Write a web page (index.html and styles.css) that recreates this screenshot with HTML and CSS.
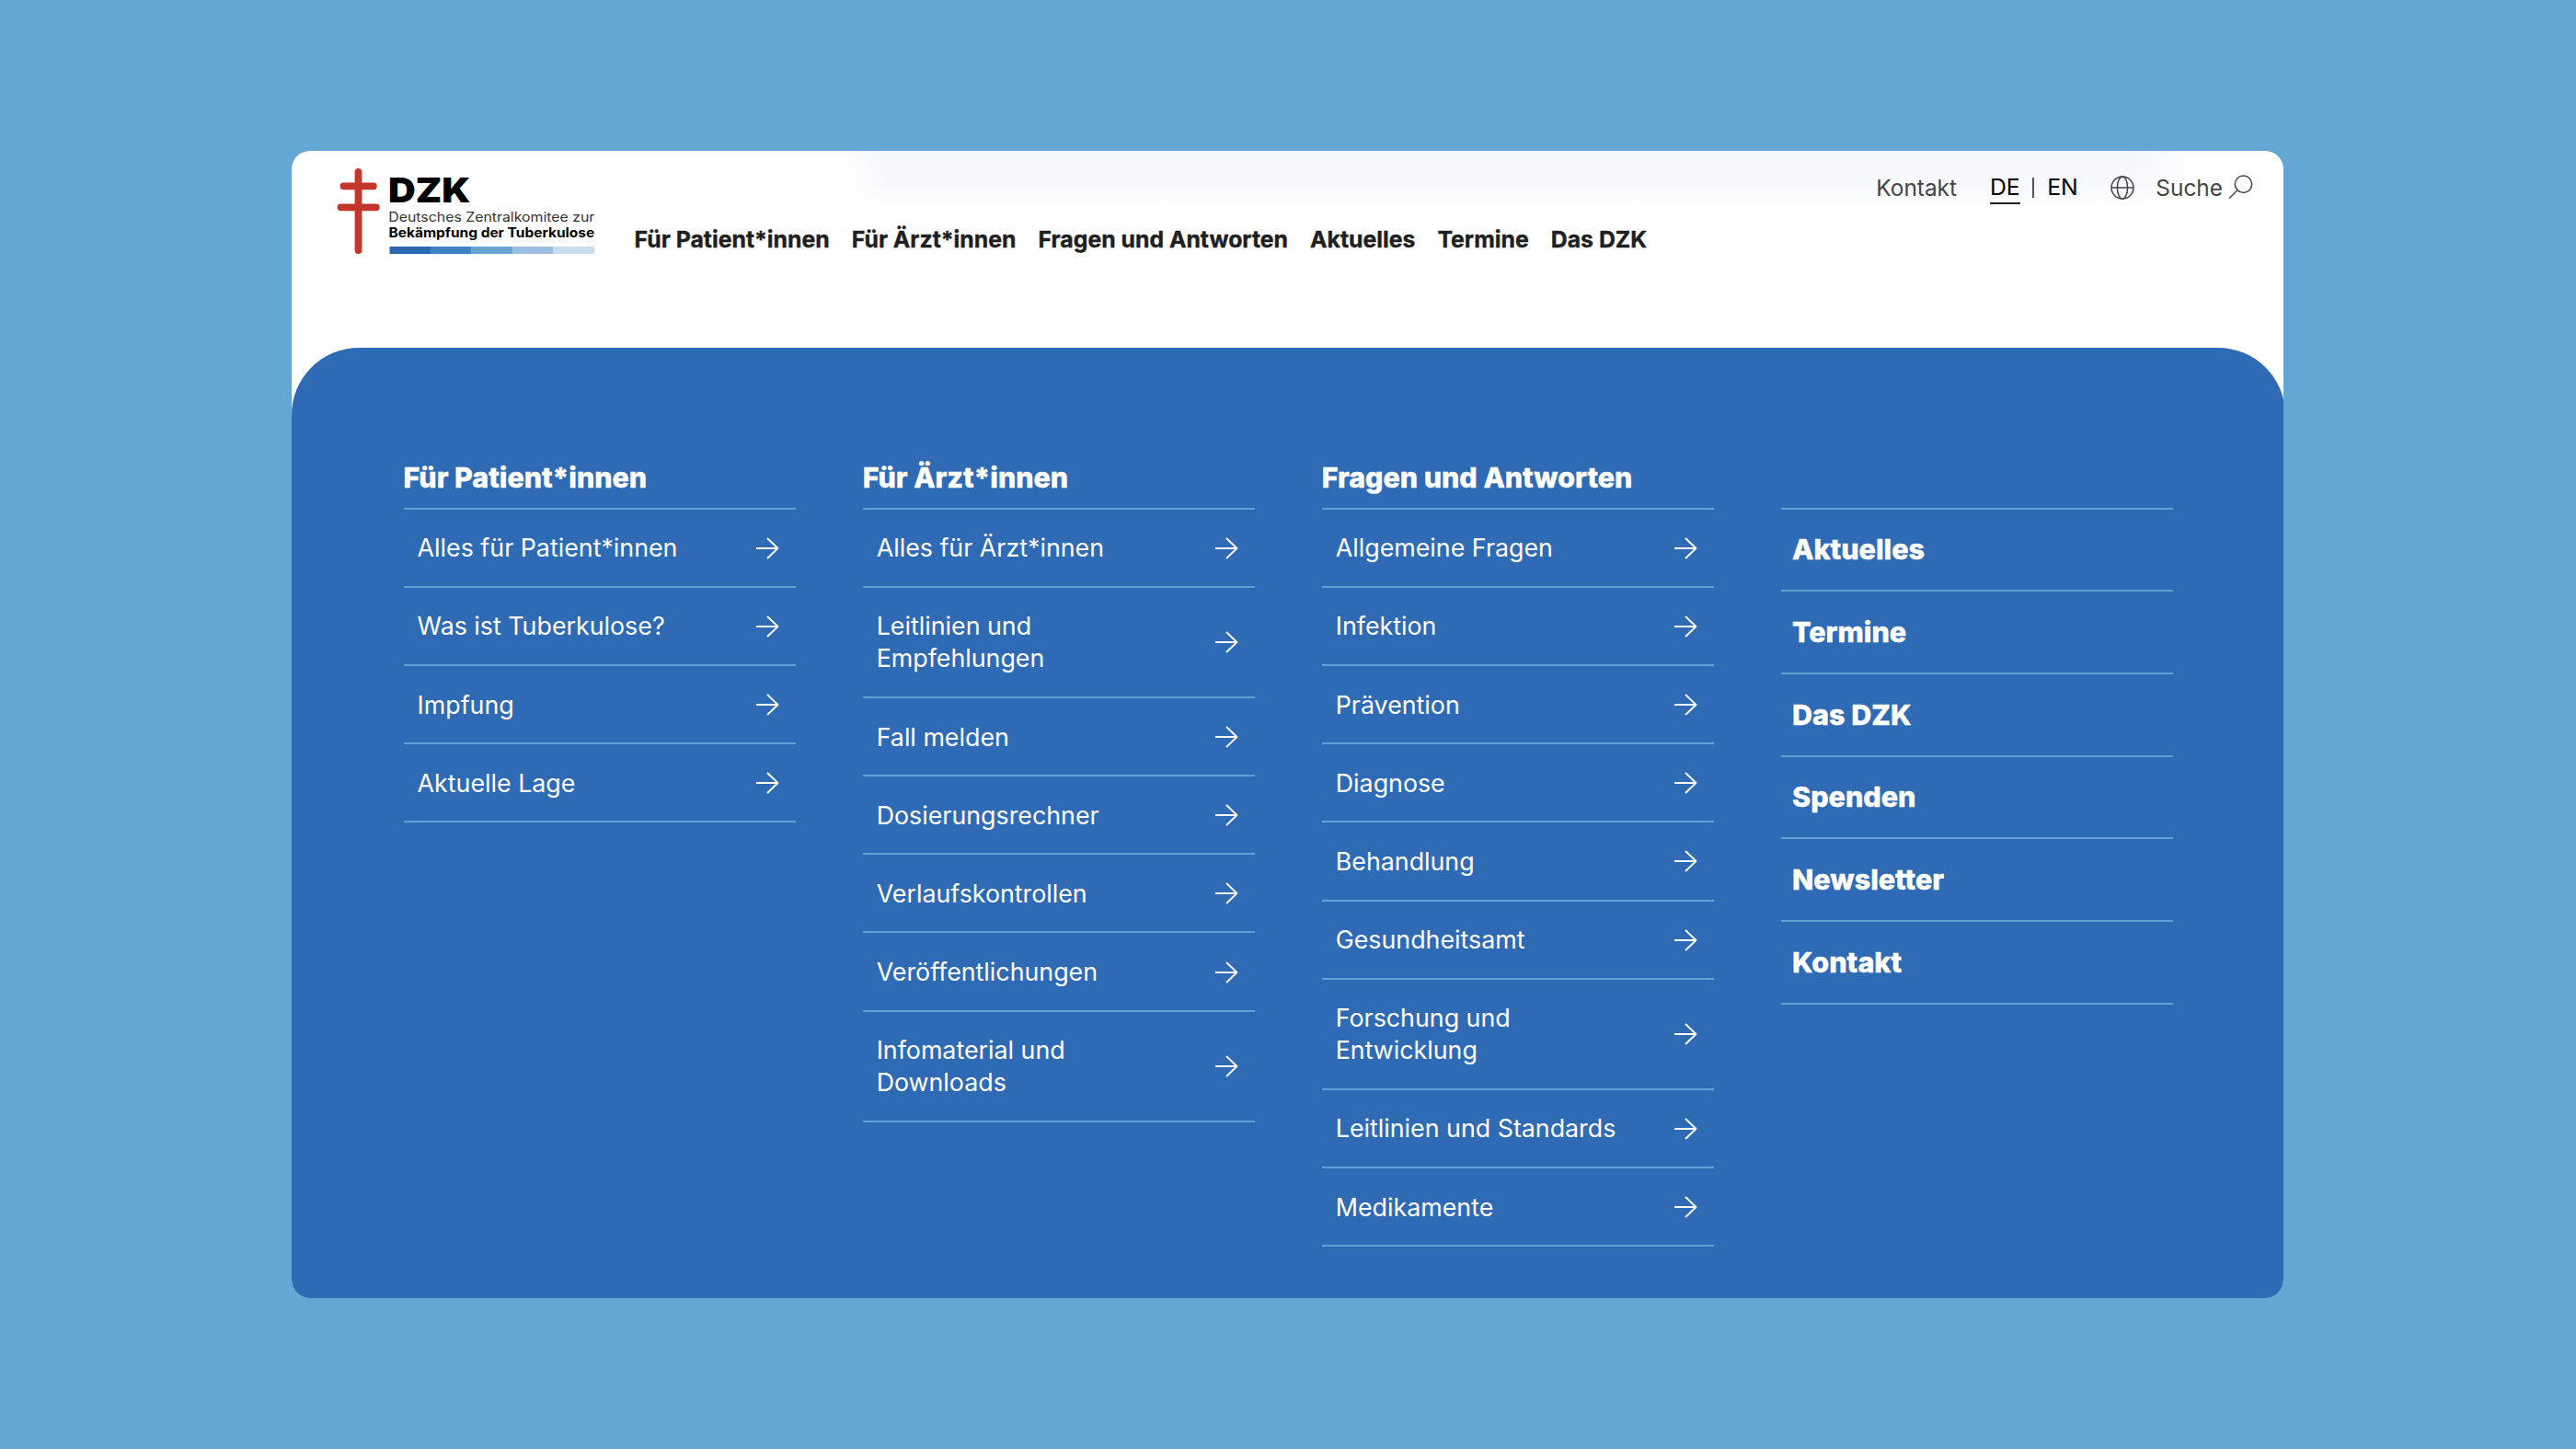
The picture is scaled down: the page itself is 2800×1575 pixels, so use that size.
FILE: index.html
```html
<!DOCTYPE html>
<html lang="de">
<head>
  <meta charset="UTF-8">
  <meta name="viewport" content="width=device-width, initial-scale=1.0">
  <title>DZK – Deutsches Zentralkomitee zur Bekämpfung der Tuberkulose</title>
  <link rel="stylesheet" href="styles.css">
</head>
<body>
  <svg class="sprite" aria-hidden="true">
    <symbol id="arrow" viewBox="0 0 26 26">
      <path d="M1 13h23.5M13 2l11.5 11L13 24" />
    </symbol>
  </svg>

  <div class="window">
    <header class="header">
      <a class="logo" href="#">
        <svg width="283" height="95" viewBox="0 0 283 95">
          <path class="logo-cross" d="M24.5 4v85M8.5 19.3h32.4M5.5 42.3h38.4" />
          <text class="logo-name" x="57" y="37.3" textLength="89.5" lengthAdjust="spacingAndGlyphs">DZK</text>
          <text class="logo-sub" x="57.3" y="58.2" textLength="224" lengthAdjust="spacingAndGlyphs">Deutsches Zentralkomitee zur</text>
          <text class="logo-sub bold" x="57.5" y="74.7" textLength="223.6" lengthAdjust="spacingAndGlyphs">Bekämpfung der Tuberkulose</text>
          <rect x="58.5" y="85" width="44.6" height="8" fill="#2a67b1" />
          <rect x="103" y="85" width="44.6" height="8" fill="#4083c0" />
          <rect x="147.5" y="85" width="44.6" height="8" fill="#6ca4d1" />
          <rect x="192" y="85" width="44.6" height="8" fill="#9cc0e1" />
          <rect x="236.5" y="85" width="44.6" height="8" fill="#c9dbed" />
        </svg>
      </a>

      <nav class="main-nav">
        <a href="#">Für Patient*innen</a>
        <a href="#">Für Ärzt*innen</a>
        <a href="#">Fragen und Antworten</a>
        <a href="#">Aktuelles</a>
        <a href="#">Termine</a>
        <a href="#">Das DZK</a>
      </nav>

      <div class="meta-nav">
        <a class="contact" href="#">Kontakt</a>
        <div class="lang">
          <a class="active" href="#">DE</a>
          <span class="divider"></span>
          <a href="#">EN</a>
        </div>
        <svg class="globe" width="26" height="26" viewBox="0 0 26 26">
          <circle cx="13" cy="13" r="12" />
          <ellipse cx="13" cy="13" rx="5.6" ry="12" />
          <path d="M1 13h24" />
        </svg>
        <a class="search" href="#">
          Suche
          <svg width="27" height="27" viewBox="0 0 27 27">
            <circle cx="16.5" cy="10.2" r="9.2" />
            <path d="M10 16.7L1 25.7" />
          </svg>
        </a>
      </div>
    </header>

    <div class="mega-menu">
      <section>
        <h2>Für Patient*innen</h2>
        <ul class="links">
          <li><a href="#">Alles für Patient*innen</a><svg><use href="#arrow" /></svg></li>
          <li><a href="#">Was ist Tuberkulose?</a><svg><use href="#arrow" /></svg></li>
          <li><a href="#">Impfung</a><svg><use href="#arrow" /></svg></li>
          <li><a href="#">Aktuelle Lage</a><svg><use href="#arrow" /></svg></li>
        </ul>
      </section>

      <section>
        <h2>Für Ärzt*innen</h2>
        <ul class="links">
          <li><a href="#">Alles für Ärzt*innen</a><svg><use href="#arrow" /></svg></li>
          <li><a href="#">Leitlinien und<br>Empfehlungen</a><svg><use href="#arrow" /></svg></li>
          <li><a href="#">Fall melden</a><svg><use href="#arrow" /></svg></li>
          <li><a href="#">Dosierungsrechner</a><svg><use href="#arrow" /></svg></li>
          <li><a href="#">Verlaufskontrollen</a><svg><use href="#arrow" /></svg></li>
          <li><a href="#">Veröffentlichungen</a><svg><use href="#arrow" /></svg></li>
          <li><a href="#">Infomaterial und<br>Downloads</a><svg><use href="#arrow" /></svg></li>
        </ul>
      </section>

      <section>
        <h2>Fragen und Antworten</h2>
        <ul class="links">
          <li><a href="#">Allgemeine Fragen</a><svg><use href="#arrow" /></svg></li>
          <li><a href="#">Infektion</a><svg><use href="#arrow" /></svg></li>
          <li><a href="#">Prävention</a><svg><use href="#arrow" /></svg></li>
          <li><a href="#">Diagnose</a><svg><use href="#arrow" /></svg></li>
          <li><a href="#">Behandlung</a><svg><use href="#arrow" /></svg></li>
          <li><a href="#">Gesundheitsamt</a><svg><use href="#arrow" /></svg></li>
          <li><a href="#">Forschung und<br>Entwicklung</a><svg><use href="#arrow" /></svg></li>
          <li><a href="#">Leitlinien und Standards</a><svg><use href="#arrow" /></svg></li>
          <li><a href="#">Medikamente</a><svg><use href="#arrow" /></svg></li>
        </ul>
      </section>

      <section class="more">
        <ul class="links">
          <li><a href="#">Aktuelles</a></li>
          <li><a href="#">Termine</a></li>
          <li><a href="#">Das DZK</a></li>
          <li><a href="#">Spenden</a></li>
          <li><a href="#">Newsletter</a></li>
          <li><a href="#">Kontakt</a></li>
        </ul>
      </section>
    </div>
  </div>
</body>
</html>
```

FILE: styles.css
```css
* {
  box-sizing: border-box;
}
body {
  margin: 0;
  height: 1575px;
  padding-top: 164px;
  background-color: #65a7d4;
  font-family: Inter, sans-serif;
  overflow: hidden;
}
a {
  color: inherit;
  text-decoration: none;
}
.sprite {
  display: none;
}
.window {
  width: 2165px;
  height: 1247px;
  margin-left: 317px;
  background-color: #fff;
  border-radius: 20px;
  overflow: hidden;
}

/* Header */
.header {
  display: flex;
  align-items: flex-start;
  height: 214.3px;
  padding: 0 33px 0 48px;
  /* soft shadow at the top, faded out on both sides */
  background:
    linear-gradient(to right, #fff, rgba(255, 255, 255, 0)) 598px 0 / 50px 62px no-repeat,
    linear-gradient(to left, #fff, rgba(255, 255, 255, 0)) 2000px 0 / 70px 62px no-repeat,
    linear-gradient(#f4f6fa, #f8f9fd 60%, #fff) 598px 0 / 1472px 62px no-repeat;
}
.logo {
  margin-top: 19.3px;
}
.logo svg {
  display: block;
}
.logo-cross {
  fill: none;
  stroke: #c3362b;
  stroke-width: 7.8;
  stroke-linecap: round;
}
.logo-name {
  font-size: 37.5px;
  font-weight: 900;
}
.logo-sub {
  font-size: 14px;
  fill: #333;
}
.logo-sub.bold {
  font-weight: 700;
  fill: #000;
}
.main-nav {
  display: flex;
  gap: 24.1px;
  margin: 80px 0 0 41.6px;
  font-size: 24.8px;
  font-weight: 700;
  line-height: 32px;
  color: #1f1f1f;
  white-space: nowrap;
  -webkit-text-stroke: 0.4px;
}
.meta-nav {
  display: flex;
  align-items: center;
  height: 40px;
  margin: 19.5px 0 0 auto;
  font-size: 24.4px;
  color: #444;
}
.meta-nav svg {
  fill: none;
  stroke: #444;
  stroke-width: 1.5;
}
.lang {
  display: flex;
  align-items: center;
  margin-left: 36px;
  font-size: 24.8px;
  color: #000;
}
.lang a {
  line-height: 33px;
  border-bottom: 2px solid transparent;
  border-top: 2px solid transparent;
}
.lang .active {
  border-bottom-color: #222;
}
.divider {
  width: 2px;
  height: 22px;
  margin: 0 14.2px 0 13.2px;
  background-color: #555;
}
.globe {
  margin-left: 35px;
}
.search {
  display: flex;
  align-items: center;
  gap: 6px;
  margin-left: 23.6px;
}

/* Mega menu */
.mega-menu {
  display: grid;
  grid-template-columns: repeat(4, 426.2px);
  gap: 72.9px;
  width: 2167px;
  height: 1033px;
  padding: 121.5px 0 0 121.6px;
  background-color: #2f6bb4;
  border-radius: 73px 73px 0 0;
  color: #fff;
}
.mega-menu h2 {
  margin: 0 0 12.3px;
  font-size: 30.4px;
  font-weight: 800;
  line-height: 39.5px;
  -webkit-text-stroke: 0.4px;
}
.links {
  margin: 0;
  padding: 0;
  list-style: none;
  border-top: 2px solid #65a0d2;
}
.links li {
  display: flex;
  align-items: center;
  justify-content: space-between;
  padding: 24.65px 18px 23.65px 15px;
  border-bottom: 2px solid #65a0d2;
  font-size: 26.8px;
  line-height: 34.9px;
}
.links svg {
  width: 26px;
  height: 26px;
  fill: none;
  stroke: #fff;
  stroke-width: 1.8;
  stroke-linejoin: round;
}
.more {
  padding-top: 51.8px;
}
.more .links li {
  padding: 23.75px 12.2px 23.95px;
  font-size: 30.5px;
  font-weight: 800;
  line-height: 40px;
  -webkit-text-stroke: 0.4px;
}
```
